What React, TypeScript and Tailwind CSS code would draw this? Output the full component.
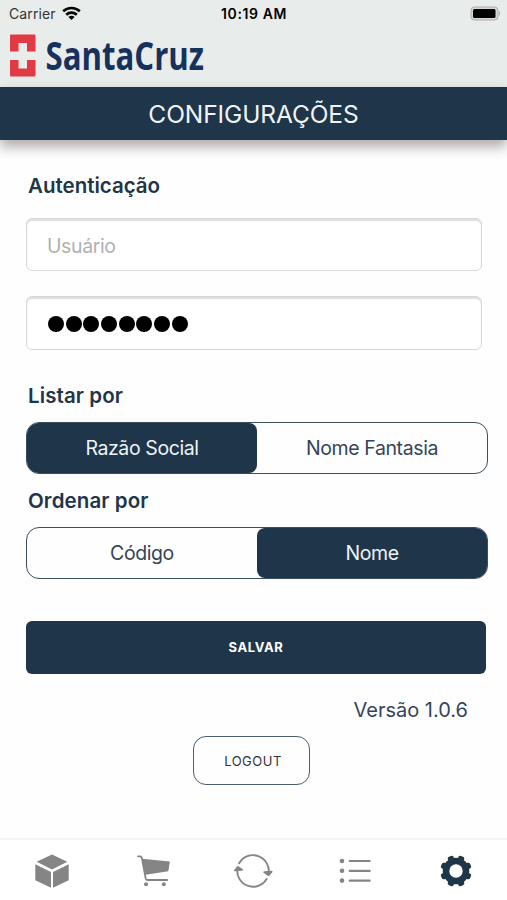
import React, { useState } from "react";

type SegmentedProps = {
  options: string[];
  value: string;
  onChange: (value: string) => void;
};

function Segmented({ options, value, onChange }: SegmentedProps) {
  return (
    <div className="flex h-[52px] w-[462px] overflow-hidden rounded-[13px] border border-[#3a4e61]">
      {options.map((option) => (
        <button
          key={option}
          onClick={() => onChange(option)}
          className={
            option === value
              ? "flex-1 rounded-[8px] bg-[#1f3549] pt-[2px] text-[19.5px] tracking-[-0.4px] text-[#eef3f7]"
              : "flex-1 pt-[2px] text-[19.5px] tracking-[-0.4px] text-[#354557]"
          }
        >
          {option}
        </button>
      ))}
    </div>
  );
}

function Logo() {
  return (
    <svg width="220" height="60" viewBox="0 -4 220 60" className="-mt-1 block">
      <path
        fill="#e23a45"
        d="M2 5.500a1 1 0 0 1 1-1h23.500a1 1 0 0 1 1 1V21.500h-8.500V13h-8.500v8.500H2zM2 30h8.500v8.500h8.500V30h8.500v15.500a1 1 0 0 1-1 1H3a1 1 0 0 1-1-1z"
      />
      <text
        x="37.500"
        y="39.500"
        textLength="158.500"
        lengthAdjust="spacingAndGlyphs"
        fill="#17315f"
        fontFamily="Open Sans, sans-serif"
        fontWeight="700"
        fontSize="38.500"
      >
        SantaCruz
      </text>
    </svg>
  );
}

function CubeIcon() {
  return (
    <svg width="36" height="36" viewBox="0 0 36 36" fill="#858585">
      <path d="M19 1.500 34.300 8.800 19 16.600 3.700 8.800zM2.300 11.200 18 19v15.800L2.300 27.200zM35.700 11.200 20 19v15.800l15.700-7.600z" />
    </svg>
  );
}

function CartIcon() {
  return (
    <svg width="36" height="36" viewBox="0 0 36 36" fill="#858585">
      <path d="M8 5.800 35.900 8.400 34.300 18.200 11.500 21.800z" />
      <path
        d="M4 3.300h2.200q1.300.1 1.600 1.500L11.700 25.500q.4 1.500 1.800 1.500H33.200"
        fill="none"
        stroke="#858585"
        strokeWidth="1.800"
        strokeLinecap="round"
      />
      <circle cx="12" cy="31.300" r="2" />
      <circle cx="29.800" cy="31.300" r="2" />
    </svg>
  );
}

function SyncIcon() {
  return (
    <svg
      width="40"
      height="36"
      viewBox="0 0 40 36"
      fill="none"
      stroke="#858585"
      strokeWidth="1.900"
      strokeLinecap="round"
      strokeLinejoin="round"
    >
      <path d="M6.200 10.300A15.800 15.800 0 0 1 35.600 20.500" />
      <path d="M33.600 26A15.800 15.800 0 0 1 4.500 15" />
      <path d="M2 17.300 4.900 14l4.100 2.700zM31.300 19.300l4.300 2.800 2.900-3.300z" fill="#858585" />
    </svg>
  );
}

function ListIcon() {
  return (
    <svg width="36" height="36" viewBox="0 0 36 36" fill="#858585">
      {[8, 17.8, 27.6].map((y) => (
        <g key={y}>
          <circle cx="5" cy={y} r="2.300" />
          <rect x="11.700" y={y - 1.1} width="22" height="2.200" rx="1" />
        </g>
      ))}
    </svg>
  );
}

function GearIcon() {
  return (
    <svg width="36" height="36" viewBox="0 0 36 36">
      <g fill="#1f3549">
        <circle cx="18" cy="18" r="13.300" />
        {[22.5, 67.5, 112.5, 157.5, 202.5, 247.5, 292.5, 337.5].map((a) => (
          <rect
            key={a}
            x="14.900"
            y="2.200"
            width="6.200"
            height="6"
            rx="2"
            transform={`rotate(${a} 18 18)`}
          />
        ))}
      </g>
      <circle cx="18" cy="18" r="6.700" fill="#fff" />
    </svg>
  );
}

export default function App() {
  const [listBy, setListBy] = useState("Razão Social");
  const [orderBy, setOrderBy] = useState("Nome");

  return (
    <div className="flex h-[900px] w-[507px] flex-col overflow-hidden bg-[#fefefe] font-['Inter','Liberation_Sans',sans-serif] text-[#1f3549]">
      {/* Status bar + logo */}
      <header className="h-[87px] shrink-0 bg-[#e8eceb]">
        <div className="grid h-[30px] grid-cols-3 items-center pr-[6px] pl-[9px] text-[14px] text-black">
          <div className="flex items-center gap-[6px] pb-[3px] tracking-[0.1px] text-[#333]">
            <span>Carrier</span>
            <svg width="19" height="15" viewBox="0 0 19 15" fill="none" stroke="#000" strokeWidth="2.600">
              <path d="M1.200 5.300a12 12 0 0 1 16.600 0M4.200 8.700a7.700 7.700 0 0 1 10.600 0" />
              <path d="M9.500 14 6.400 11a4.400 4.400 0 0 1 6.200 0z" fill="#000" stroke="none" />
            </svg>
          </div>
          <div className="pr-[2px] pb-[3px] text-center font-semibold tracking-[0.6px]">10:19 AM</div>
          <div className="flex justify-end pb-[3px]">
            <svg width="31" height="15" viewBox="0 0 31 15">
              <rect x="1" y="1" width="27" height="13" rx="3.500" fill="#d6d9d8" stroke="#a9acab" />
              <rect x="3" y="3" width="22.500" height="9" rx="1.500" fill="#000" />
              <path d="M29 5q2 2.500 0 5z" fill="#a9acab" />
            </svg>
          </div>
        </div>
        <div className="pl-[8px]">
          <Logo />
        </div>
      </header>

      {/* Title */}
      <div className="z-10 flex h-[53px] shrink-0 items-center justify-center bg-[#1f3549] pt-[2px] shadow-[0_7px_12px_rgba(60,45,50,0.4)]">
        <h1 className="text-[24.5px] font-normal tracking-[-0.1px] text-[#f0f4f9]">CONFIGURAÇÕES</h1>
      </div>

      <main className="flex flex-1 flex-col pl-[26px]">
        <h2 className="mt-[32px] ml-[2px] text-[20.5px] leading-[28px] font-semibold">Autenticação</h2>
        <input
          type="text"
          placeholder="Usuário"
          className="mt-[18px] h-[53px] w-[456px] shrink-0 rounded-[6px] border-[1.5px] border-[#d8d8d8] bg-white px-[20px] pt-[2px] text-[19.5px] tracking-[-0.4px] shadow-[inset_0_2px_1px_#dedede] placeholder:text-[#b0b0b0]"
        />
        <div className="mt-[25px] flex h-[54px] w-[456px] shrink-0 items-center gap-[1.7px] rounded-[6px] border-[1.5px] border-[#d8d8d8] bg-white px-[21px] pt-px shadow-[inset_0_2px_1px_#dedede]">
          {Array.from({ length: 8 }, (_, i) => (
            <span key={i} className="size-4 rounded-full bg-black" />
          ))}
        </div>

        <h2 className="mt-[32px] mb-[12px] ml-[2px] text-[20.5px] leading-[28px] font-semibold tracking-[0.1px]">
          Listar por
        </h2>
        <Segmented options={["Razão Social", "Nome Fantasia"]} value={listBy} onChange={setListBy} />

        <h2 className="mt-[13px] mb-[12px] ml-[2px] text-[20.5px] leading-[28px] font-semibold tracking-[0.1px]">
          Ordenar por
        </h2>
        <Segmented options={["Código", "Nome"]} value={orderBy} onChange={setOrderBy} />

        <button className="mt-[42px] h-[53px] w-[460px] shrink-0 rounded-[6px] bg-[#1f3549] text-[13px] font-bold tracking-[0.6px] text-white">
          SALVAR
        </button>
        <p className="mt-[22px] pr-[39px] text-right text-[20px] leading-[28px] text-[#35445a]">Versão 1.0.6</p>
        <button className="mt-[12px] ml-[167px] h-[49px] w-[117px] shrink-0 rounded-[13px] border-[1.5px] border-[#4b5d70] pt-[2px] pl-[3px] text-[13px] tracking-[0.5px] text-[#333]">
          LOGOUT
        </button>
      </main>

      {/* Bottom tabs */}
      <nav className="grid h-[62px] shrink-0 grid-cols-5 items-center justify-items-center border-t-2 border-[#f4f4f4] bg-white pt-[2px]">
        <CubeIcon />
        <CartIcon />
        <SyncIcon />
        <ListIcon />
        <GearIcon />
      </nav>
    </div>
  );
}
